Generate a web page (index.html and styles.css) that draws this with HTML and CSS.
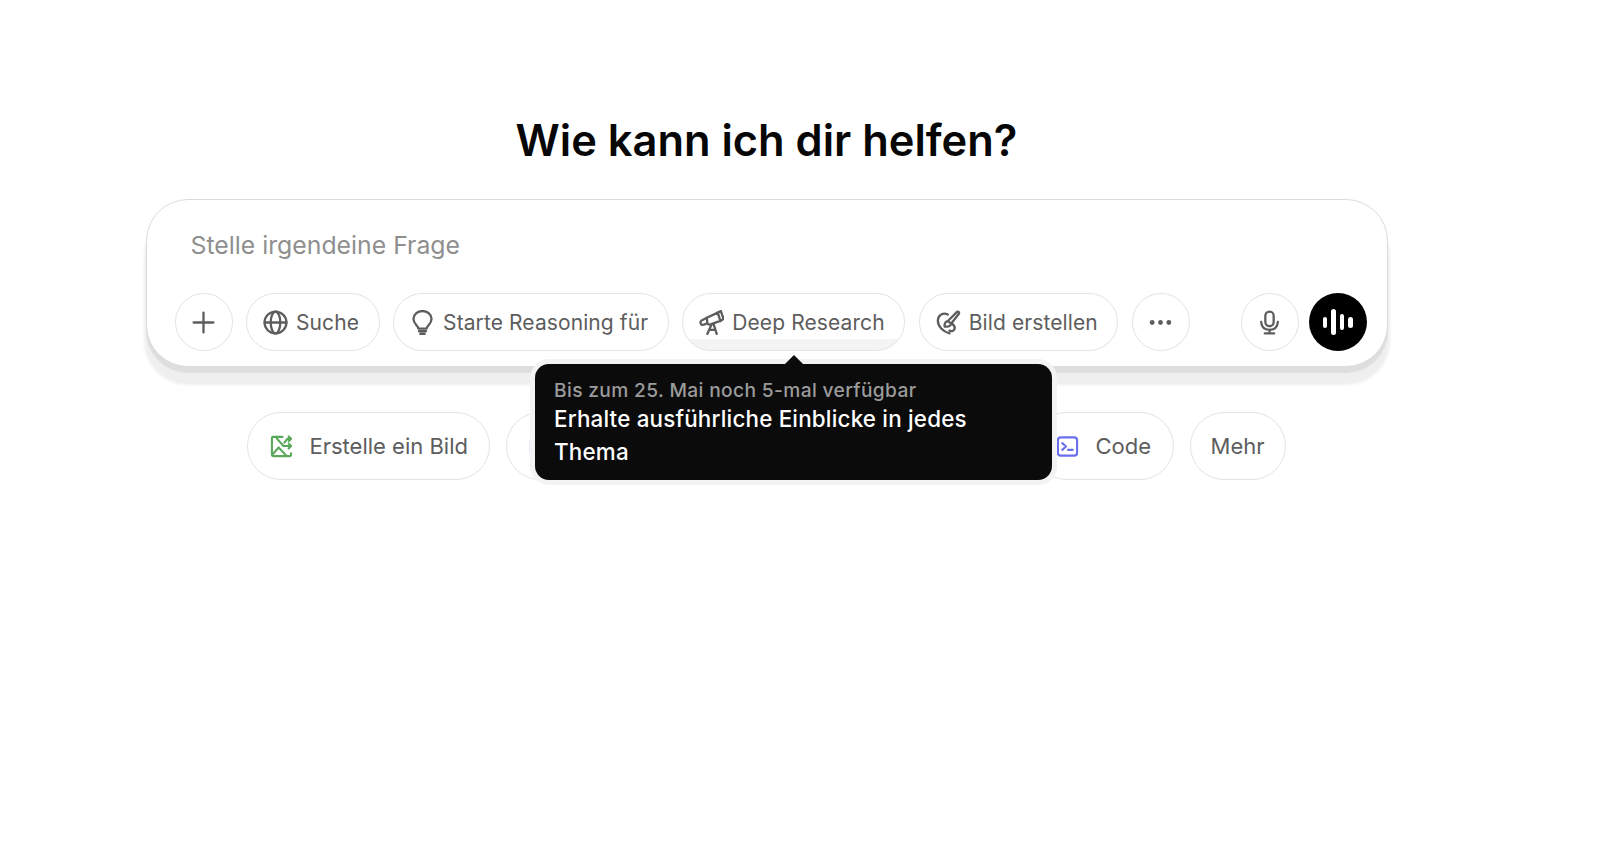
FILE: index.html
```html
<!DOCTYPE html>
<html lang="de">
<head>
    <meta charset="UTF-8">
    <title>Wie kann ich dir helfen?</title>
    <link rel="stylesheet" href="styles.css">
</head>
<body>
    <main class="page">
        <h1 class="headline">Wie kann ich dir helfen?</h1>

        <section class="composer">
            <div class="placeholder">Stelle irgendeine Frage</div>
            <div class="toolbar">
                <button class="chip round">
                    <svg class="icon" viewBox="0 0 24 24"><path d="M12 2.500v19M2.500 12h19"/></svg>
                </button>
                <button class="chip">
                    <svg class="icon" viewBox="0 0 24 24"><circle cx="12" cy="12" r="10.500"/><ellipse cx="12" cy="12" rx="4.600" ry="10.500"/><path d="M1.500 12h21"/></svg>
                    Suche
                </button>
                <button class="chip">
                    <svg class="icon" viewBox="0 0 24 24"><path d="M8 17.800c0-2.800-4.700-4-4.700-9.300a8.700 7.500 0 0 1 17.400 0c0 5.300-4.700 6.500-4.700 9.300z"/><path d="M8.600 20.400h6.800M10 23h4"/></svg>
                    Starte Reasoning für
                </button>
                <button class="chip hovered">
                    <svg class="icon" viewBox="0 0 24 24"><path d="M7.500 7.500 18 2.500l2.500 8-10 3.500c-1.200.3-2-.2-2.500-1.300z"/><path d="M18 2.500 21 1l2.500 7.500-3 2"/><path d="M7.500 7.500 2.500 10c-1.400 1-1.300 2.600-.4 3.600.6.700 1.600.9 2.600.4L8 12.700"/><path d="M12 14l-4 9M14 13.500l3 9.500M9.800 19h5.700"/></svg>
                    Deep Research
                </button>
                <button class="chip">
                    <svg class="icon" viewBox="0 0 24 24"><path d="M11.400 4.400C7 2.200 2 4.600 1.800 10c-.2 5.800 5 10.800 11.200 12.400"/><path d="M20.200 1.800c1.400-.6 2.400.6 1.800 1.800l-7.400 9.400-3.200-2.400z"/><path d="M11.400 10.600c-2.600.4-3.600 2.600-3 5.400 2.600.2 6-.4 6.200-3"/><path d="M15.800 13.400c1.800 1.600 2.800 3.400 1.800 5.400-.8 1.600-3 1.800-4.600 1"/></svg>
                    Bild erstellen
                </button>
                <button class="chip round">
                    <svg class="icon dots" viewBox="0 0 24 24"><circle cx="4" cy="12" r="2.300"/><circle cx="12" cy="12" r="2.300"/><circle cx="20" cy="12" r="2.300"/></svg>
                </button>
                <div class="spacer"></div>
                <button class="chip round">
                    <svg class="icon" viewBox="0 0 24 24"><rect x="8" y="1.500" width="8" height="14" rx="4"/><path d="M4 11.500c.4 4.800 3.600 7.500 8 7.500s7.600-2.700 8-7.500M12 19v3.500M7.500 22.500h9"/></svg>
                </button>
                <button class="voice">
                    <span class="bar short"></span>
                    <span class="bar tall"></span>
                    <span class="bar mid"></span>
                    <span class="bar short"></span>
                </button>
            </div>
        </section>

        <div class="suggestions">
            <div class="pill">
                <svg class="pill-icon green" viewBox="0 0 24 24"><path d="M13 2H3.500A1.500 1.500 0 0 0 2 3.500v17A1.500 1.500 0 0 0 3.500 22h17a1.500 1.500 0 0 0 1.500-1.500V19"/><path d="M3 20l6-7 8 8.500M7 3.500l7 8h8M15 8l3-4h4M19.500 1.500 22 4l-2.500 2.500M19.500 9l2.500 2.500-2.500 2.500"/></svg>
                Erstelle ein Bild
            </div>
            <div class="pill hidden-one">
                <svg class="pill-icon blue" viewBox="0 0 24 24"><rect x="2" y="2" width="20" height="20" rx="3"/></svg>
            </div>
            <div class="pill hidden-two"></div>
            <div class="pill">
                <svg class="pill-icon blue" viewBox="0 0 24 24"><rect x="2" y="2.500" width="20" height="19" rx="3"/><path d="M6.500 8.500l4 3.500-4 3.500M12.500 15.500h5"/></svg>
                Code
            </div>
            <div class="pill">Mehr</div>
        </div>

        <div class="tooltip">
            <div class="tooltip-note">Bis zum 25. Mai noch 5-mal verfügbar</div>
            <div class="tooltip-text">Erhalte ausführliche Einblicke in jedes Thema</div>
        </div>
    </main>
</body>
</html>
```

FILE: styles.css
```css
* {
    margin: 0;
    padding: 0;
    box-sizing: border-box;
}

body {
    font-family: Inter, "Liberation Sans", sans-serif;
    background: #fff;
    color: #5d5d5d;
    height: 859px;
    overflow: hidden;
}

.page {
    position: relative;
    width: 1533px;
    display: flex;
    flex-direction: column;
    align-items: center;
    padding-top: 112px;
}

.headline {
    font-size: 43.400px;
    line-height: 56px;
    font-weight: 600;
    color: #060606;
    margin-bottom: 31px;
}

.composer {
    width: 1242px;
    height: 168px;
    background: #fff;
    border: 1.500px solid #dcdcdc;
    border-radius: 42px;
    box-shadow: 0 6px 1px 0 #dedede, 0 16px 3px 2px #efefef;
    padding: 0 20px 15px 28px;
    display: flex;
    flex-direction: column;
    justify-content: space-between;
}

.placeholder {
    font-size: 24.800px;
    line-height: 32px;
    color: #8f8f8f;
    padding: 29px 0 0 16px;
}

.toolbar {
    display: flex;
    align-items: center;
    gap: 13.500px;
}

.chip {
    height: 58px;
    display: flex;
    align-items: center;
    flex-shrink: 0;
    gap: 8px;
    padding: 0 19.500px 0 16px;
    background: #fff;
    border: 1.500px solid #e3e3e3;
    border-radius: 29px;
    font-family: inherit;
    font-size: 21px;
    font-weight: 400;
    letter-spacing: 0.1px;
    white-space: nowrap;
    color: #5d5d5d;
}

.chip.hovered {
    background: linear-gradient(#fff 80%, #f4f4f4 80%);
}

.chip.round {
    width: 58px;
    padding: 0;
    justify-content: center;
}

.icon {
    width: 25px;
    height: 25px;
    fill: none;
    stroke: #5d5d5d;
    stroke-width: 2.200;
    stroke-linecap: round;
    stroke-linejoin: round;
    flex-shrink: 0;
}

.icon.dots {
    fill: #5d5d5d;
    stroke: none;
}

.spacer {
    flex: 1;
}

.voice {
    width: 58px;
    height: 58px;
    flex-shrink: 0;
    margin-left: -3.500px;
    border: 0;
    border-radius: 50%;
    background: #000;
    display: flex;
    align-items: center;
    justify-content: center;
    gap: 4px;
}

.bar {
    width: 4.500px;
    border-radius: 3px;
    background: #fff;
}

.bar.short { height: 11px; }
.bar.tall { height: 26px; }
.bar.mid { height: 16px; }

.suggestions {
    display: flex;
    gap: 16px;
    margin-top: 45px;
}

.pill {
    height: 68px;
    display: flex;
    align-items: center;
    gap: 16px;
    padding: 0 21.500px 0 22px;
    background: #fff;
    border: 1.500px solid #e3e3e3;
    border-radius: 34px;
    font-size: 22px;
    white-space: nowrap;
    color: #5d5d5d;
}

.pill:last-child {
    padding: 0 20px;
}

.pill-icon {
    width: 23px;
    height: 23px;
    fill: none;
    stroke-width: 2.200;
    stroke-linecap: round;
    stroke-linejoin: round;
    flex-shrink: 0;
}

.pill-icon.green { stroke: #5aa85a; }
.pill-icon.blue { stroke: #6a6ff0; }

.hidden-one { width: 271px; }
.hidden-two { width: 224px; }

.tooltip {
    position: absolute;
    left: 535px;
    top: 364px;
    width: 517px;
    height: 116px;
    padding: 13px 19px;
    background: #0b0b0b;
    border-radius: 14px;
    box-shadow: 0 0 0 5px #f3f3f3;
}

.tooltip::before {
    content: "";
    position: absolute;
    left: 250px;
    top: -9px;
    border-left: 9px solid transparent;
    border-right: 9px solid transparent;
    border-bottom: 9px solid #0b0b0b;
}

.tooltip-note {
    font-size: 19.200px;
    line-height: 26px;
    font-weight: 500;
    letter-spacing: 0.35px;
    color: #9b9b9b;
}

.tooltip-text {
    font-size: 22.400px;
    line-height: 32.600px;
    font-weight: 500;
    letter-spacing: 0.19px;
    color: #fff;
}
```
